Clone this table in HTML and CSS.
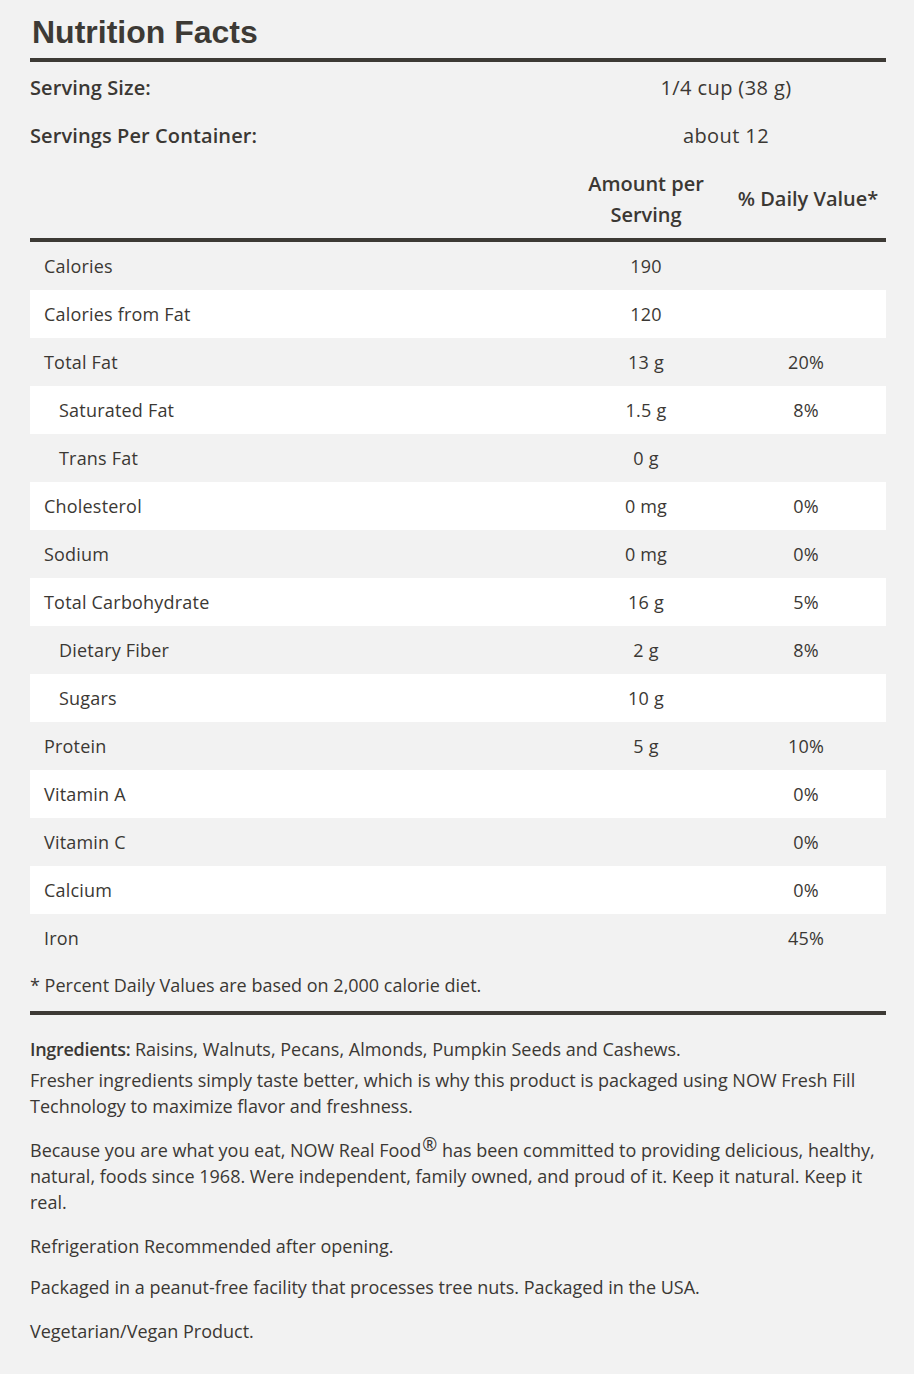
FILE: index.html
```html
<!DOCTYPE html>
<html lang="en">
<head>
<meta charset="utf-8">
<title>Nutrition Facts</title>
<link rel="stylesheet" href="styles.css">
</head>
<body>
<div class="wrap">
  <h1 class="title">Nutrition Facts</h1>
  <div class="serving">
    <div class="srow"><span class="slabel">Serving Size:</span><span class="sval">1/4 cup (38 g)</span></div>
    <div class="srow"><span class="slabel">Servings Per Container:</span><span class="sval">about 12</span></div>
    <div class="hrow"><span></span><span class="hcol">Amount per Serving</span><span class="hcol">% Daily Value*</span></div>
  </div>
  <div class="facts">
    <div class="row"><span class="name">Calories</span><span class="amt">190</span><span class="dv"></span></div>
    <div class="row"><span class="name">Calories from Fat</span><span class="amt">120</span><span class="dv"></span></div>
    <div class="row"><span class="name">Total Fat</span><span class="amt">13 g</span><span class="dv">20%</span></div>
    <div class="row"><span class="name sub">Saturated Fat</span><span class="amt">1.5 g</span><span class="dv">8%</span></div>
    <div class="row"><span class="name sub">Trans Fat</span><span class="amt">0 g</span><span class="dv"></span></div>
    <div class="row"><span class="name">Cholesterol</span><span class="amt">0 mg</span><span class="dv">0%</span></div>
    <div class="row"><span class="name">Sodium</span><span class="amt">0 mg</span><span class="dv">0%</span></div>
    <div class="row"><span class="name">Total Carbohydrate</span><span class="amt">16 g</span><span class="dv">5%</span></div>
    <div class="row"><span class="name sub">Dietary Fiber</span><span class="amt">2 g</span><span class="dv">8%</span></div>
    <div class="row"><span class="name sub">Sugars</span><span class="amt">10 g</span><span class="dv"></span></div>
    <div class="row"><span class="name">Protein</span><span class="amt">5 g</span><span class="dv">10%</span></div>
    <div class="row"><span class="name">Vitamin A</span><span class="amt"></span><span class="dv">0%</span></div>
    <div class="row"><span class="name">Vitamin C</span><span class="amt"></span><span class="dv">0%</span></div>
    <div class="row"><span class="name">Calcium</span><span class="amt"></span><span class="dv">0%</span></div>
    <div class="row"><span class="name">Iron</span><span class="amt"></span><span class="dv">45%</span></div>
  </div>
  <p class="footnote">* Percent Daily Values are based on 2,000 calorie diet.</p>
  <div class="info">
    <p class="ingredients"><strong>Ingredients:</strong> Raisins, Walnuts, Pecans, Almonds, Pumpkin Seeds and Cashews.</p>
    <p>Fresher ingredients simply taste better, which is why this product is packaged using NOW Fresh Fill Technology to maximize flavor and freshness.</p>
    <p>Because you are what you eat, NOW Real Food<span class="reg">®</span> has been committed to providing delicious, healthy, natural, foods since 1968. Were independent, family owned, and proud of it. Keep it natural. Keep it real.</p>
    <p class="tight">Refrigeration Recommended after opening.</p>
    <p>Packaged in a peanut-free facility that processes tree nuts. Packaged in the USA.</p>
    <p>Vegetarian/Vegan Product.</p>
  </div>
</div>
</body>
</html>
```
FILE: styles.css
```css
html, body {
  margin: 0;
  padding: 0;
  background: #f2f2f2;
}
body {
  font-family: "Open Sans", Lato, sans-serif;
  color: #3b3834;
}
.wrap {
  padding: 0 28px 0 30px;
}
.title {
  margin: 0;
  padding: 13px 0 7px 2px;
  font-family: "Liberation Sans", Arial, sans-serif;
  font-weight: 700;
  font-size: 32px;
  line-height: 38px;
  color: #3d3a35;
  border-bottom: 4px solid #3d3a35;
}
.serving {
  border-bottom: 4px solid #3d3a35;
}
.srow {
  display: grid;
  grid-template-columns: 1fr 320px;
  align-items: center;
  height: 48px;
  padding-top: 1px;
}
.srow + .srow {
  padding-top: 0;
}
.slabel {
  font-weight: 600;
  font-size: 20px;
  letter-spacing: 0.1px;
}
.sval {
  text-align: center;
  font-size: 20px;
  letter-spacing: 0.4px;
}
.hrow {
  display: grid;
  grid-template-columns: 1fr 160px 160px;
  align-items: center;
  height: 79px;
}
.hcol {
  text-align: center;
  font-weight: 600;
  font-size: 20px;
  line-height: 31px;
}
.hcol:nth-child(2) {
  padding: 0 20px;
}
.hcol:nth-child(3) {
  margin-right: -4px;
}
.row {
  display: grid;
  grid-template-columns: 1fr 160px 160px;
  align-items: center;
  height: 48px;
  font-size: 18px;
  letter-spacing: 0.2px;
}
.row:nth-child(even) {
  background: #ffffff;
}
.name {
  padding-left: 14px;
}
.name.sub {
  padding-left: 29px;
}
.amt, .dv {
  text-align: center;
}
.footnote {
  margin: 0;
  padding: 10px 0 13px;
  font-size: 18px;
  line-height: 26px;
  border-bottom: 4px solid #3d3a35;
}
.info {
  padding-top: 21px;
}
.info p {
  margin: 0 0 18px;
  font-size: 18px;
  line-height: 26px;
}
.info p.ingredients {
  margin-bottom: 5px;
}
.info p.tight {
  margin-bottom: 15px;
}
.ingredients strong {
  font-weight: 600;
  letter-spacing: -0.3px;
}
.reg {
  font-size: 18px;
  line-height: 0;
  vertical-align: 6px;
  margin-left: 1px;
}
```
